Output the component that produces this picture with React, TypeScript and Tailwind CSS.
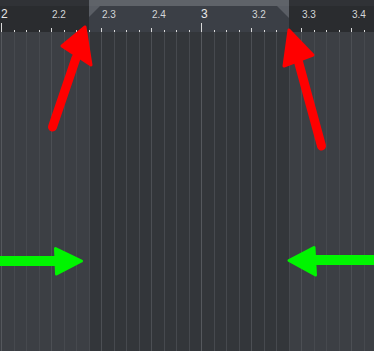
import React from "react";

const COLS = Array.from({ length: 30 }, (_, k) => k);
const LABELS: Record<number, string> = {
  0: "2",
  4: "2.2",
  8: "2.3",
  12: "2.4",
  16: "3",
  20: "3.2",
  24: "3.3",
  28: "3.4",
};

function inLoop(k: number) {
  return k >= 7 && k <= 22;
}

function Ruler() {
  return (
    <div className="flex flex-col h-[32px] shrink-0">
      <div className="flex h-[6px]">
        <div className="w-[89px] bg-[#303236]" />
        <div className="w-[200px] bg-[#5f6369]" />
        <div className="flex-1 bg-[#303236]" />
      </div>
      <div className="relative flex h-[26px] bg-[#2a2c2f] pl-[1px]">
        <div className="absolute left-[89px] top-0 w-[11px] h-[11px] bg-[#5a5e65] [clip-path:polygon(0_0,100%_0,0_100%)]" />
        <div className="absolute left-[277px] top-0 w-[12px] h-[12px] bg-[#5a5e65] [clip-path:polygon(0_0,100%_0,100%_100%)]" />
        {COLS.map((k) => {
          const label = LABELS[k];
          const isBar = k % 16 === 0;
          const isBeat = k % 4 === 0;
          return (
            <div
              key={k}
              className={
                (k % 2 === 0 ? "w-[13px] " : "w-[12px] ") +
                (inLoop(k) ? "bg-[#3b3f46] " : "") +
                "flex flex-col shrink-0 h-full"
              }
            >
              <div className="h-[14px]">
                {label &&
                  (isBar ? (
                    <div className="relative mt-[2px] whitespace-nowrap text-[12px] leading-[12px] text-[#e8e8e8]">
                      {label}
                    </div>
                  ) : (
                    <div className="relative mt-[4px] ml-[1px] whitespace-nowrap text-[10px] leading-[10px] text-[#d4d6d8]">
                      {label}
                    </div>
                  ))}
              </div>
              <div
                className={
                  (isBar ? "h-[9px] " : isBeat ? "h-[4px] " : "h-[2px] ") +
                  "mt-auto w-px bg-[#d8d8d8]"
                }
              />
            </div>
          );
        })}
      </div>
    </div>
  );
}

function Grid() {
  return (
    <div className="flex flex-1 pl-[1px] bg-[#3c3f44]">
      {COLS.map((k) => {
        const isBar = k % 16 === 0;
        const isBeat = k % 4 === 0;
        return (
          <div
            key={k}
            className={
              (k % 2 === 0 ? "w-[13px] " : "w-[12px] ") +
              (inLoop(k) ? "bg-[#33363a] " : "") +
              (isBar
                ? "border-[#55585d] "
                : isBeat
                ? "border-[#4c4f54] "
                : "border-[#46494e] ") +
              "shrink-0 h-full border-l"
            }
          />
        );
      })}
    </div>
  );
}

function Arrows() {
  return (
    <svg
      className="absolute inset-0 pointer-events-none"
      width={374}
      height={351}
      viewBox="0 0 374 351"
    >
      <g fill="#ff0000" stroke="#ff0000" strokeLinejoin="round">
        <polygon points="85,27 62,46 91,65" strokeWidth={3} />
        <line x1={76} y1={58} x2={52.5} y2={127} strokeWidth={9} strokeLinecap="round" />
        <polygon points="289,30 313,55 284,66" strokeWidth={3} />
        <line x1={298} y1={60} x2={321.5} y2={146} strokeWidth={9} strokeLinecap="round" />
      </g>
      <g fill="#00f500" stroke="#00f500" strokeLinejoin="round">
        <rect x={-2} y={256} width={59} height={10} strokeWidth={0} />
        <polygon points="55.5,248.5 81.5,261 56.5,274" strokeWidth={3} />
        <rect x={313} y={255} width={63} height={10} strokeWidth={0} />
        <polygon points="289,260.5 314,247.5 315.5,275" strokeWidth={3} />
      </g>
    </svg>
  );
}

export default function App() {
  return (
    <div className="relative w-[374px] h-[351px] overflow-hidden flex flex-col bg-[#3c3f44] font-['Liberation_Sans',Arial,sans-serif]">
      <Ruler />
      <Grid />
      <Arrows />
    </div>
  );
}
